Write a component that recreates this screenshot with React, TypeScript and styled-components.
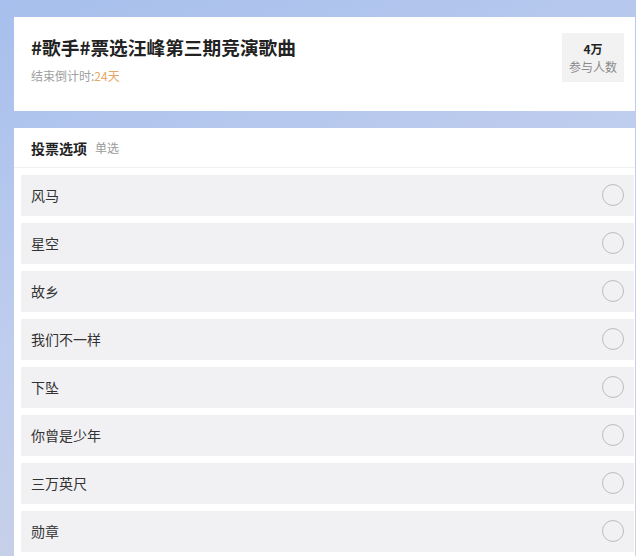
import styled, { createGlobalStyle } from 'styled-components';

const GlobalStyle = createGlobalStyle`
	body {
		margin: 0;
		background: #fff;
		font-family: "Noto Sans CJK SC", "Noto Sans", sans-serif;
	}
`;

const Page = styled.div`
	width: 636px;
	height: 556px;
	box-sizing: border-box;
	padding: 17px 1px 0 14px;
	background: linear-gradient(160deg, #a6bfec 0%, #bfcdee 45%, #cdd2e2 100%);
	display: flex;
	flex-direction: column;
	gap: 17px;
	overflow: hidden;
`;

const HeaderCard = styled.div`
	background: #fff;
	height: 94px;
	box-sizing: border-box;
	padding: 16px 11px 0 17px;
	display: flex;
	justify-content: space-between;
	align-items: flex-start;
`;

const TitleBlock = styled.div`
	display: flex;
	flex-direction: column;
	gap: 6px;
`;

const Title = styled.h1`
	margin: 0;
	font-size: 18.7px;
	line-height: 28px;
	font-weight: 700;
	color: #222;
`;

const Countdown = styled.div`
	font-size: 12px;
	line-height: 18px;
	color: #a0a0a0;
`;

const Days = styled.span`
	color: #e6a868;
`;

const StatBox = styled.div`
	width: 62px;
	height: 49px;
	background: #f2f2f3;
	display: flex;
	flex-direction: column;
	align-items: center;
	justify-content: center;
`;

const StatValue = styled.div`
	font-size: 12px;
	line-height: 18px;
	font-weight: 700;
	color: #222;
`;

const StatLabel = styled.div`
	font-size: 12px;
	line-height: 18px;
	color: #8a8a8a;
`;

const ListCard = styled.div`
	flex: 1;
	background: #fff;
`;

const ListHeader = styled.div`
	height: 40px;
	box-sizing: border-box;
	border-bottom: 1px solid #f1f1f1;
	padding-left: 17px;
	display: flex;
	align-items: center;
	gap: 8px;
`;

const ListTitle = styled.span`
	font-size: 14px;
	font-weight: 700;
	color: #222;
`;

const ListHint = styled.span`
	font-size: 12px;
	color: #9a9a9a;
`;

const Options = styled.div`
	padding: 7px 1px 0 7px;
	display: flex;
	flex-direction: column;
	gap: 7px;
`;

const OptionRow = styled.div`
	height: 41px;
	box-sizing: border-box;
	background: #f1f1f3;
	padding: 0 10px 1px;
	display: flex;
	align-items: center;
	justify-content: space-between;
	font-size: 14px;
	color: #333;
`;

const Radio = styled.span`
	width: 22px;
	height: 22px;
	box-sizing: border-box;
	border-radius: 50%;
	border: 1.5px solid #bdbdbd;
`;

const options = ['风马', '星空', '故乡', '我们不一样', '下坠', '你曾是少年', '三万英尺', '勋章'];

const App = () => {
	return (
		<>
			<GlobalStyle />
			<Page>
				<HeaderCard>
					<TitleBlock>
						<Title>#歌手#票选汪峰第三期竞演歌曲</Title>
						<Countdown>
							结束倒计时:<Days>24天</Days>
						</Countdown>
					</TitleBlock>
					<StatBox>
						<StatValue>4万</StatValue>
						<StatLabel>参与人数</StatLabel>
					</StatBox>
				</HeaderCard>
				<ListCard>
					<ListHeader>
						<ListTitle>投票选项</ListTitle>
						<ListHint>单选</ListHint>
					</ListHeader>
					<Options>
						{options.map((name) => (
							<OptionRow key={name}>
								{name}
								<Radio />
							</OptionRow>
						))}
					</Options>
				</ListCard>
			</Page>
		</>
	);
};

export default App;
